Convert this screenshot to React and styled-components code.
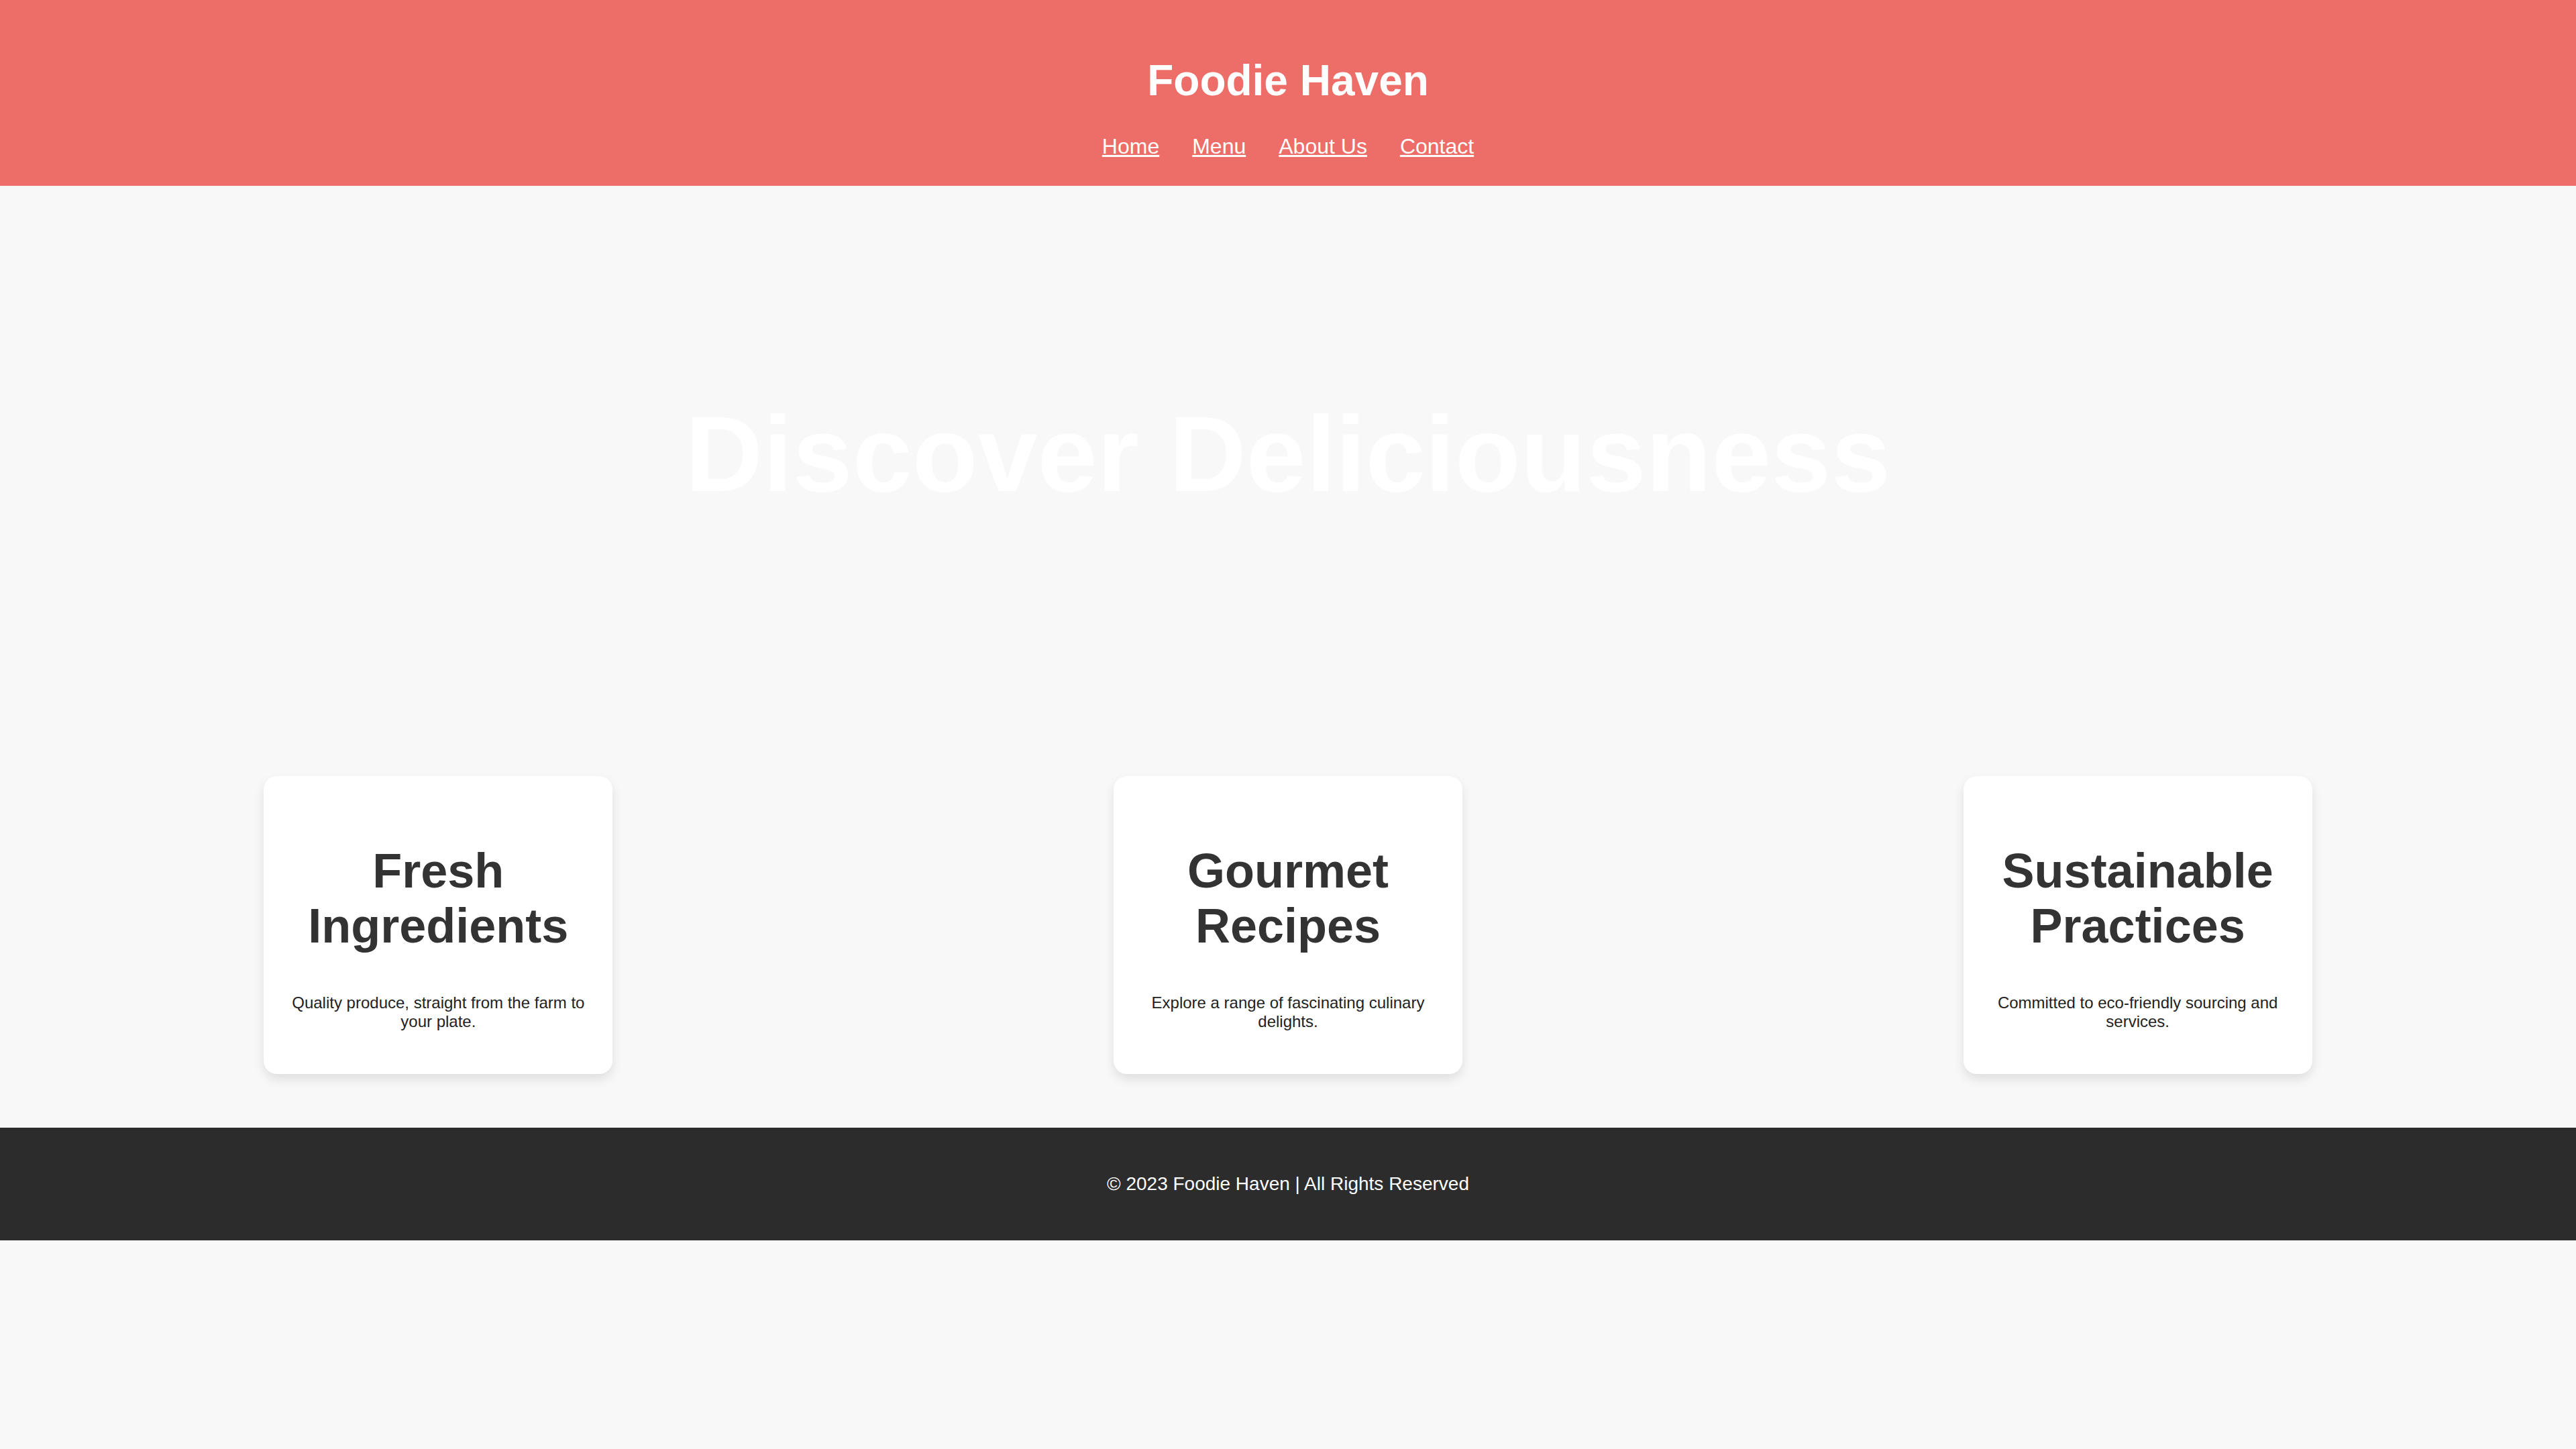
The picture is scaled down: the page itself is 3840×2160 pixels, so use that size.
import { createGlobalStyle, styled } from "styled-components";

const GlobalStyle = createGlobalStyle`
  body {
    margin: 0;
    background-color: #f8f8f8;
    font-family: "Liberation Sans", Arial, sans-serif;
    color: #333;
  }
`;

const Header = styled.header`
  background-color: #ed6e68;
  color: white;
  text-align: center;
  padding: 40px;
`;

const Logo = styled.h1`
  font-size: 64px;
  margin: 42.88px 0;
`;

const Nav = styled.nav`
  display: flex;
  justify-content: center;
  gap: 49px;
  font-size: 32px;

  a {
    color: white;
    text-decoration: underline;
  }
`;

const Hero = styled.section`
  padding: 200px 40px;
  text-align: center;
`;

const HeroTitle = styled.h1`
  font-size: 160px;
  color: white;
  margin: 108px 0;
`;

const Features = styled.section`
  display: flex;
  justify-content: space-around;
  padding: 80px 20px;
`;

const Card = styled.div`
  width: 520px;
  box-sizing: border-box;
  padding: 40px;
  background-color: white;
  border-radius: 20px;
  box-shadow: 0 8px 16px rgba(0, 0, 0, 0.1);
  text-align: center;

  h2 {
    font-size: 72px;
    margin: 60px 0;
    color: #333;
  }

  p {
    font-size: 24px;
    margin: 24px 0;
    color: #222;
  }
`;

const Footer = styled.footer`
  background-color: #2c2c2c;
  color: white;
  text-align: center;
  padding: 40px;

  p {
    font-size: 28px;
    margin: 28px 0;
  }
`;

const features = [
  {
    title: "Fresh Ingredients",
    text: "Quality produce, straight from the farm to your plate.",
  },
  {
    title: "Gourmet Recipes",
    text: "Explore a range of fascinating culinary delights.",
  },
  {
    title: "Sustainable Practices",
    text: "Committed to eco-friendly sourcing and services.",
  },
];

function App() {
  return (
    <>
      <GlobalStyle />
      <Header>
        <Logo>Foodie Haven</Logo>
        <Nav>
          <a href="#home">Home</a>
          <a href="#menu">Menu</a>
          <a href="#about">About Us</a>
          <a href="#contact">Contact</a>
        </Nav>
      </Header>

      <Hero>
        <HeroTitle>Discover Deliciousness</HeroTitle>
      </Hero>

      <Features>
        {features.map((f) => (
          <Card key={f.title}>
            <h2>{f.title}</h2>
            <p>{f.text}</p>
          </Card>
        ))}
      </Features>

      <Footer>
        <p>© 2023 Foodie Haven | All Rights Reserved</p>
      </Footer>
    </>
  );
}

export default App;
